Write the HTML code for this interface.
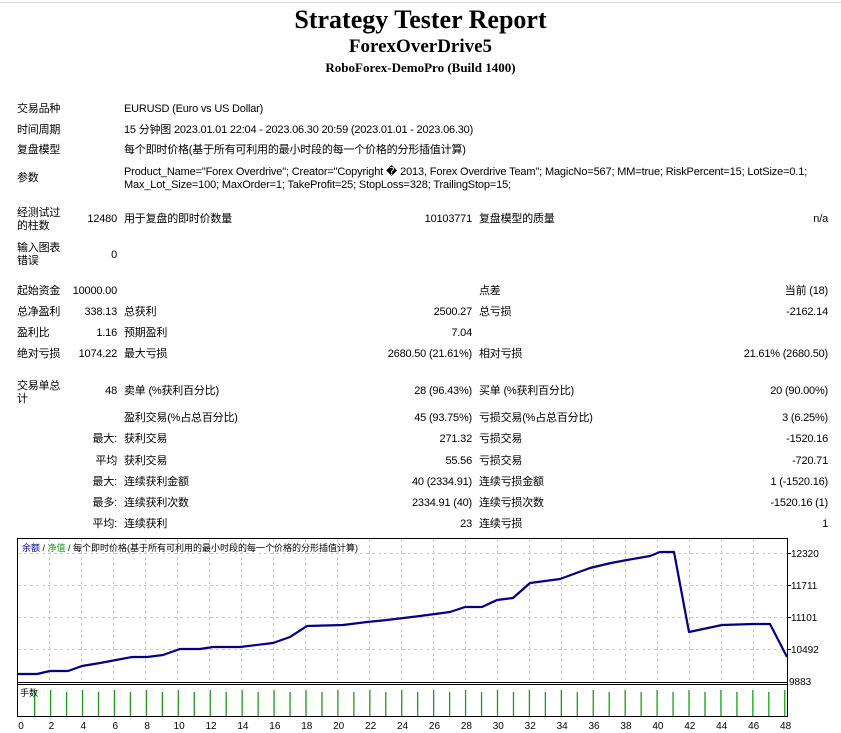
<!DOCTYPE html>
<html><head><meta charset="utf-8">
<style>
body{margin:0;width:841px;height:733px;background:#fff;position:relative;overflow:hidden;font-family:"Liberation Sans","Noto Sans CJK SC",sans-serif;font-size:11px;color:#000}
.w{position:absolute;left:0;top:2px;width:841px;height:540px}
.t{position:absolute;white-space:nowrap;line-height:13px;letter-spacing:-0.2px}
.r{text-align:right}
.h{position:absolute;left:0;width:841px;text-align:center;font-family:"Liberation Serif",serif;font-weight:bold;white-space:nowrap}
</style></head><body>
<div style="position:absolute;left:0;top:2px;width:841px;height:1px;background:#ddd"></div>
<div class="h" style="top:5px;font-size:26px;line-height:30px">Strategy Tester Report</div>
<div class="h" style="top:36px;font-size:19px;line-height:22px">ForexOverDrive5</div>
<div class="h" style="top:60px;font-size:13px;line-height:16px">RoboForex-DemoPro (Build 1400)</div>
<div class="w">
<div class="t" style="left:17px;top:101px">交易品种</div>
<div class="t" style="left:124px;top:101px">EURUSD (Euro vs US Dollar)</div>
<div class="t" style="left:17px;top:122px">时间周期</div>
<div class="t" style="left:124px;top:122px">15 分钟图 2023.01.01 22:04 - 2023.06.30 20:59 (2023.01.01 - 2023.06.30)</div>
<div class="t" style="left:17px;top:142px">复盘模型</div>
<div class="t" style="left:124px;top:142px">每个即时价格(基于所有可利用的最小时段的每一个价格的分形插值计算)</div>
<div class="t" style="left:17px;top:170px">参数</div>
<div class="t" style="left:124px;top:164px;letter-spacing:-0.15px">Product_Name="Forex Overdrive"; Creator="Copyright � 2013, Forex Overdrive Team"; MagicNo=567; MM=true; RiskPercent=15; LotSize=0.1;</div>
<div class="t" style="left:124px;top:177px;letter-spacing:-0.15px">Max_Lot_Size=100; MaxOrder=1; TakeProfit=25; StopLoss=328; TrailingStop=15;</div>

<div class="t" style="left:17px;top:205px">经测试过<br>的柱数</div>
<div class="t r" style="right:724px;top:211px">12480</div>
<div class="t" style="left:124px;top:211px">用于复盘的即时价数量</div>
<div class="t r" style="right:369px;top:211px">10103771</div>
<div class="t" style="left:479px;top:211px">复盘模型的质量</div>
<div class="t r" style="right:13px;top:211px">n/a</div>

<div class="t" style="left:17px;top:240px">输入图表<br>错误</div>
<div class="t r" style="right:724px;top:247px">0</div>

<div class="t" style="left:17px;top:283px">起始资金</div>
<div class="t r" style="right:724px;top:283px">10000.00</div>
<div class="t" style="left:479px;top:283px">点差</div>
<div class="t r" style="right:13px;top:283px">当前 (18)</div>

<div class="t" style="left:17px;top:304px">总净盈利</div>
<div class="t r" style="right:724px;top:304px">338.13</div>
<div class="t" style="left:124px;top:304px">总获利</div>
<div class="t r" style="right:369px;top:304px">2500.27</div>
<div class="t" style="left:479px;top:304px">总亏损</div>
<div class="t r" style="right:13px;top:304px">-2162.14</div>

<div class="t" style="left:17px;top:325px">盈利比</div>
<div class="t r" style="right:724px;top:325px">1.16</div>
<div class="t" style="left:124px;top:325px">预期盈利</div>
<div class="t r" style="right:369px;top:325px">7.04</div>

<div class="t" style="left:17px;top:346px">绝对亏损</div>
<div class="t r" style="right:724px;top:346px">1074.22</div>
<div class="t" style="left:124px;top:346px">最大亏损</div>
<div class="t r" style="right:369px;top:346px">2680.50 (21.61%)</div>
<div class="t" style="left:479px;top:346px">相对亏损</div>
<div class="t r" style="right:13px;top:346px">21.61% (2680.50)</div>

<div class="t" style="left:17px;top:378px">交易单总<br>计</div>
<div class="t r" style="right:724px;top:383px">48</div>
<div class="t" style="left:124px;top:383px">卖单 (%获利百分比)</div>
<div class="t r" style="right:369px;top:383px">28 (96.43%)</div>
<div class="t" style="left:479px;top:383px">买单 (%获利百分比)</div>
<div class="t r" style="right:13px;top:383px">20 (90.00%)</div>

<div class="t" style="left:124px;top:410px">盈利交易(%占总百分比)</div>
<div class="t r" style="right:369px;top:410px">45 (93.75%)</div>
<div class="t" style="left:479px;top:410px">亏损交易(%占总百分比)</div>
<div class="t r" style="right:13px;top:410px">3 (6.25%)</div>

<div class="t r" style="right:724px;top:431px">最大:</div>
<div class="t" style="left:124px;top:431px">获利交易</div>
<div class="t r" style="right:369px;top:431px">271.32</div>
<div class="t" style="left:479px;top:431px">亏损交易</div>
<div class="t r" style="right:13px;top:431px">-1520.16</div>

<div class="t r" style="right:724px;top:453px">平均</div>
<div class="t" style="left:124px;top:453px">获利交易</div>
<div class="t r" style="right:369px;top:453px">55.56</div>
<div class="t" style="left:479px;top:453px">亏损交易</div>
<div class="t r" style="right:13px;top:453px">-720.71</div>

<div class="t r" style="right:724px;top:474px">最大:</div>
<div class="t" style="left:124px;top:474px">连续获利金额</div>
<div class="t r" style="right:369px;top:474px">40 (2334.91)</div>
<div class="t" style="left:479px;top:474px">连续亏损金额</div>
<div class="t r" style="right:13px;top:474px">1 (-1520.16)</div>

<div class="t r" style="right:724px;top:495px">最多:</div>
<div class="t" style="left:124px;top:495px">连续获利次数</div>
<div class="t r" style="right:369px;top:495px">2334.91 (40)</div>
<div class="t" style="left:479px;top:495px">连续亏损次数</div>
<div class="t r" style="right:13px;top:495px">-1520.16 (1)</div>

<div class="t r" style="right:724px;top:516px">平均:</div>
<div class="t" style="left:124px;top:516px">连续获利</div>
<div class="t r" style="right:369px;top:516px">23</div>
<div class="t" style="left:479px;top:516px">连续亏损</div>
<div class="t r" style="right:13px;top:516px">1</div>
</div>

<svg style="position:absolute;left:0;top:0" width="841" height="733">
<g stroke="#c8c8c8" stroke-dasharray="3,3" stroke-width="1">
<line x1="18" y1="553.5" x2="787" y2="553.5"/>
<line x1="18" y1="585.5" x2="787" y2="585.5"/>
<line x1="18" y1="617.5" x2="787" y2="617.5"/>
<line x1="18" y1="649.5" x2="787" y2="649.5"/>
<line x1="49.5" y1="539" x2="49.5" y2="681"/><line x1="81.5" y1="539" x2="81.5" y2="681"/><line x1="113.5" y1="539" x2="113.5" y2="681"/><line x1="145.5" y1="539" x2="145.5" y2="681"/><line x1="177.5" y1="539" x2="177.5" y2="681"/><line x1="209.5" y1="539" x2="209.5" y2="681"/><line x1="241.5" y1="539" x2="241.5" y2="681"/><line x1="273.5" y1="539" x2="273.5" y2="681"/><line x1="305.5" y1="539" x2="305.5" y2="681"/><line x1="337.5" y1="539" x2="337.5" y2="681"/><line x1="369.5" y1="539" x2="369.5" y2="681"/><line x1="401.5" y1="539" x2="401.5" y2="681"/><line x1="433.5" y1="539" x2="433.5" y2="681"/><line x1="465.5" y1="539" x2="465.5" y2="681"/><line x1="497.5" y1="539" x2="497.5" y2="681"/><line x1="529.5" y1="539" x2="529.5" y2="681"/><line x1="561.5" y1="539" x2="561.5" y2="681"/><line x1="593.5" y1="539" x2="593.5" y2="681"/><line x1="625.5" y1="539" x2="625.5" y2="681"/><line x1="657.5" y1="539" x2="657.5" y2="681"/><line x1="689.5" y1="539" x2="689.5" y2="681"/><line x1="721.5" y1="539" x2="721.5" y2="681"/><line x1="753.5" y1="539" x2="753.5" y2="681"/>
</g>
<rect x="17.5" y="538.5" width="770" height="178" fill="none" stroke="#000" stroke-width="1"/>
<line x1="17" y1="682.5" x2="788" y2="682.5" stroke="#000"/>
<line x1="17" y1="684.5" x2="788" y2="684.5" stroke="#000"/>
<polyline fill="none" stroke="#00008b" stroke-width="2.2" stroke-linejoin="round" points="18,674 37,674 50,671 68,671 82,666 100,663 132,657 147,657 163,655 180,649 200,649 213,647 240,647 273,643 290,637 307,626 343,625 367,622 387,620 420,616 450,612 465,607 482,607 497,600 513,598 530,583 560,579 590,568 611,563 627,560 650,556 660,552 674,552 689,632 722,625 753,624 770,624 787,657"/>
<g stroke="#1a9c1a" stroke-width="1.3" id="vb"></g>
<g font-family="Liberation Sans,sans-serif" font-size="10" fill="#000">
<text x="791" y="557">12320</text><text x="791" y="589">11711</text><text x="791" y="621">11101</text><text x="791" y="653">10492</text><text x="789" y="685">9883</text>
</g>
<g stroke="#000"><line x1="788" y1="553.5" x2="791" y2="553.5"/><line x1="788" y1="585.5" x2="791" y2="585.5"/><line x1="788" y1="617.5" x2="791" y2="617.5"/><line x1="788" y1="649.5" x2="791" y2="649.5"/></g>
<g font-family="Liberation Sans,sans-serif" font-size="10" fill="#000" text-anchor="middle" id="xl"></g>
<text x="22" y="551" font-family="Liberation Sans,Noto Sans CJK SC,sans-serif" font-size="9"><tspan fill="#00008b">余额</tspan> / <tspan fill="#1a9c1a">净值</tspan> / 每个即时价格(基于所有可利用的最小时段的每一个价格的分形插值计算)</text>
<text x="20" y="696" font-family="Liberation Sans,Noto Sans CJK SC,sans-serif" font-size="9">手数</text>
</svg>
<script>
var vb=document.getElementById('vb'),xl=document.getElementById('xl'),ns='http://www.w3.org/2000/svg';
for(var i=1;i<=48;i++){var x=18.7+i*15.96;var l=document.createElementNS(ns,'line');l.setAttribute('x1',x);l.setAttribute('x2',x);l.setAttribute('y1',i%2?692:690);l.setAttribute('y2',716);vb.appendChild(l);}
for(var i=0;i<=48;i+=2){var t=document.createElementNS(ns,'text');t.setAttribute('x',i==0?21:19.5+i*15.96);t.setAttribute('y',729);t.textContent=i;xl.appendChild(t);}
</script>
</body></html>
